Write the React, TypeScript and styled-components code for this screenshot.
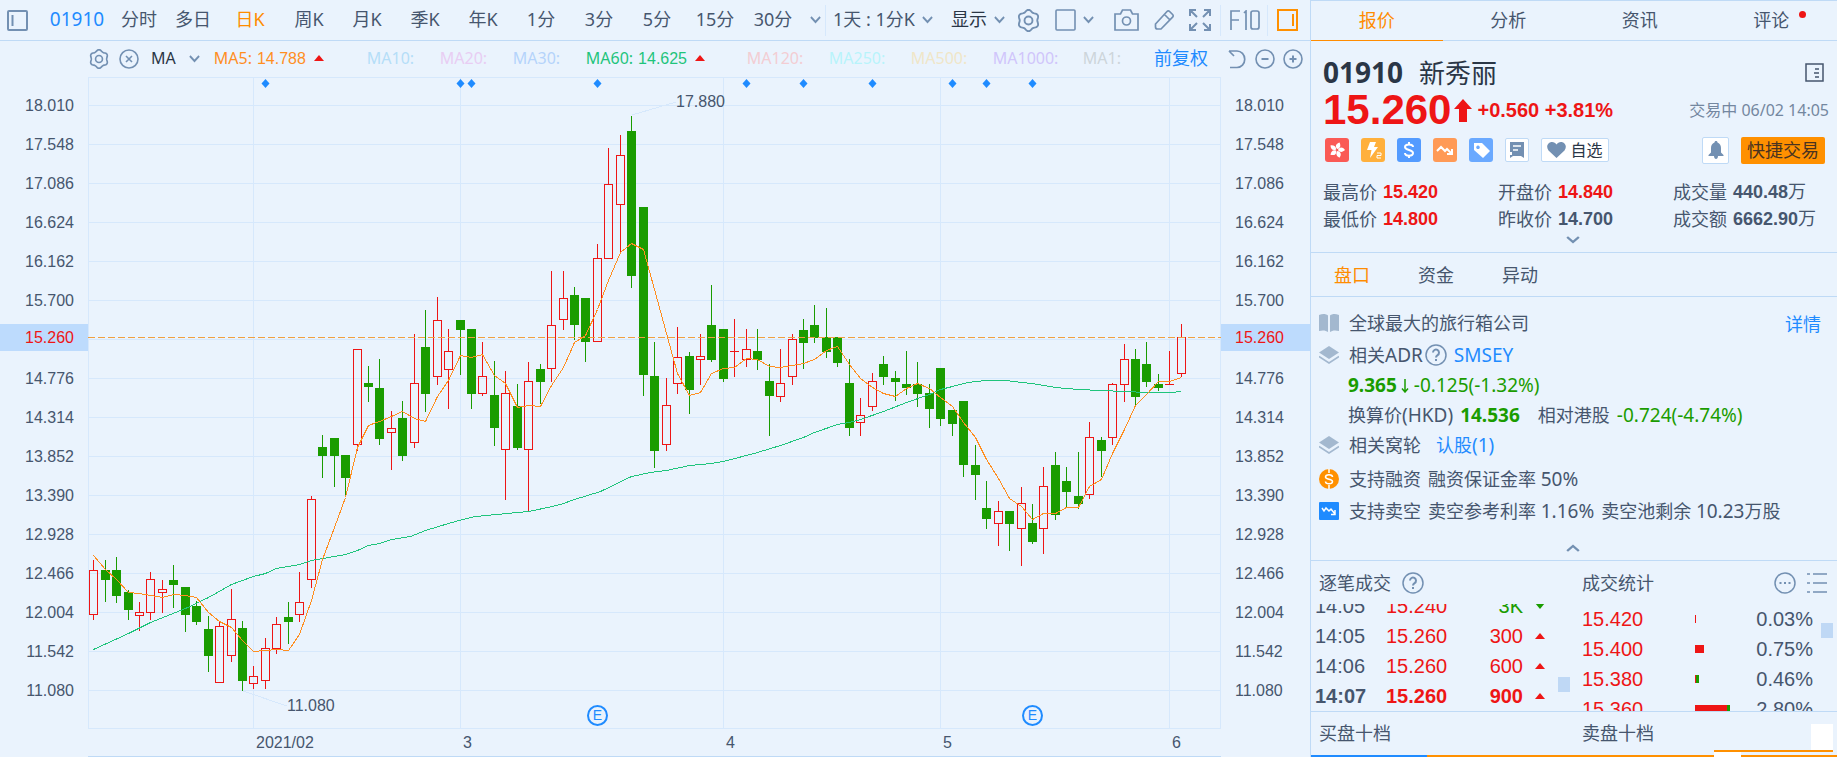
import React from "react";
import styled, { createGlobalStyle, css } from "styled-components";

const c = {
  bg: "#eaf3fd",
  line: "#bfdaf6",
  grid: "#d6e8fc",
  text: "#46566e",
  dark: "#2a3646",
  icon: "#7390b2",
  soft: "#a3b8cf",
  blue: "#1f8bff",
  orange: "#ff8c00",
  red: "#ee1515",
  green: "#1a9c00",
  mark: "#bddbfd",
};

const ui = `"Noto Sans", "Noto Sans CJK SC", sans-serif`;
const digits = `"Liberation Sans", "Noto Sans CJK SC", sans-serif`;

const GlobalStyle = createGlobalStyle`
  * { box-sizing: border-box; }
  body {
    margin: 0;
    background: ${c.bg};
    color: ${c.text};
    font-family: ${ui};
    font-size: 18px;
    font-weight: 400;
    overflow: hidden;
  }
  button { font: inherit; color: inherit; background: none; border: 0; padding: 0; cursor: pointer; }
  a { color: ${c.blue}; text-decoration: none; }
  ul, ol, dl, dd, h1, h2, p { margin: 0; padding: 0; list-style: none; font-size: inherit; font-weight: inherit; }
  svg { display: block; flex: none; }
`;

/* ---------- data ---------- */

type Candle = [x: number, up: 0 | 1, high: number, top: number, bottom: number, low: number];

const candles: Candle[] = [
  [93, 1, 560, 570, 615, 620], [105, 0, 560, 570, 580, 602], [116, 0, 557, 570, 596, 603],
  [128, 0, 590, 592, 610, 620], [139, 1, 602, 612, 616, 631], [150, 1, 572, 579, 613, 620],
  [162, 1, 580, 589, 593, 613], [173, 0, 565, 580, 585, 608], [185, 0, 587, 587, 615, 632],
  [196, 0, 601, 606, 622, 625], [208, 0, 616, 629, 656, 672], [219, 1, 621, 626, 683, 683],
  [231, 1, 589, 619, 656, 662], [242, 0, 621, 628, 681, 691], [253, 1, 666, 676, 684, 689],
  [265, 1, 638, 648, 681, 689], [276, 1, 617, 624, 649, 654], [288, 0, 602, 617, 622, 644],
  [299, 1, 572, 602, 615, 622], [311, 1, 496, 499, 580, 588], [322, 0, 435, 447, 456, 478],
  [334, 0, 438, 438, 456, 487], [345, 0, 455, 455, 478, 495], [357, 1, 349, 349, 445, 451],
  [368, 0, 366, 383, 387, 402], [379, 0, 359, 388, 439, 445], [391, 1, 411, 428, 433, 470],
  [402, 0, 401, 418, 456, 461], [414, 1, 334, 383, 443, 448], [425, 0, 310, 347, 394, 412],
  [437, 1, 297, 320, 377, 385], [448, 1, 329, 351, 370, 409], [460, 0, 320, 320, 330, 375],
  [471, 0, 329, 329, 394, 409], [482, 1, 342, 376, 394, 396], [494, 0, 361, 395, 428, 446],
  [505, 1, 371, 393, 450, 500], [517, 0, 384, 406, 448, 450], [528, 1, 362, 381, 450, 512],
  [540, 0, 364, 369, 382, 404], [551, 1, 271, 325, 369, 382], [563, 1, 271, 298, 320, 330],
  [574, 0, 287, 295, 325, 340], [585, 0, 298, 298, 342, 362], [597, 1, 244, 258, 342, 342],
  [608, 1, 148, 184, 259, 259], [620, 1, 135, 155, 205, 252], [631, 0, 116, 131, 276, 288],
  [643, 0, 207, 207, 375, 396], [654, 0, 342, 376, 451, 468], [666, 1, 378, 405, 445, 451],
  [677, 1, 327, 357, 384, 394], [689, 0, 352, 356, 390, 414], [700, 1, 334, 356, 360, 385],
  [711, 0, 285, 325, 360, 362], [723, 0, 329, 329, 379, 382], [734, 1, 319, 351, 352, 377],
  [746, 1, 329, 349, 360, 367], [757, 0, 329, 351, 360, 370], [769, 0, 364, 381, 396, 436],
  [780, 1, 349, 383, 397, 402], [792, 1, 334, 339, 377, 385], [803, 0, 319, 330, 343, 369],
  [814, 0, 305, 325, 338, 343], [826, 0, 308, 337, 352, 358], [837, 0, 337, 337, 363, 367],
  [849, 0, 359, 383, 428, 436], [860, 1, 398, 415, 423, 436], [872, 1, 373, 381, 407, 411],
  [883, 0, 356, 364, 377, 385], [895, 0, 371, 378, 382, 401], [906, 0, 351, 384, 388, 395],
  [917, 0, 362, 384, 394, 407], [929, 0, 384, 393, 409, 428], [940, 0, 368, 368, 419, 426],
  [952, 0, 410, 410, 424, 436], [963, 0, 401, 401, 465, 477], [975, 0, 445, 465, 475, 500],
  [986, 0, 481, 508, 519, 529], [998, 1, 501, 511, 524, 546], [1009, 0, 511, 511, 524, 551],
  [1021, 1, 487, 503, 529, 566], [1032, 0, 504, 523, 542, 544], [1043, 1, 467, 486, 529, 554],
  [1055, 0, 452, 465, 515, 520], [1066, 0, 467, 481, 492, 507], [1078, 0, 452, 496, 504, 509],
  [1089, 1, 422, 437, 495, 499], [1101, 0, 437, 440, 451, 477], [1112, 1, 383, 384, 438, 445],
  [1124, 1, 344, 359, 385, 402], [1135, 0, 349, 359, 397, 405], [1146, 0, 342, 364, 382, 387],
  [1158, 0, 374, 384, 388, 391], [1169, 1, 351, 384, 385, 385], [1181, 1, 324, 337, 374, 377],
];

const ma5 = [
  555, 569, 579, 592, 593, 595, 597, 594, 595, 597, 612, 621, 627, 640, 651, 650, 649, 650, 634, 600,
  559, 527, 497, 447, 425, 421, 416, 411, 418, 421, 396, 380, 355, 357, 354, 375, 383, 407, 405, 406,
  385, 367, 342, 335, 309, 280, 252, 243, 249, 289, 333, 373, 395, 392, 373, 368, 367, 358, 359, 366,
  367, 365, 363, 359, 350, 346, 364, 378, 387, 393, 396, 388, 383, 388, 397, 406, 422, 437, 459, 478,
  498, 506, 519, 513, 513, 507, 507, 486, 479, 453, 429, 405, 394, 381, 381, 377,
];

const ma60: [number, number][] = [
  [93, 649], [128, 633], [150, 622], [185, 608], [208, 597], [231, 584], [242, 580], [253, 576],
  [265, 573], [276, 568], [299, 564], [311, 560], [345, 554], [357, 550], [368, 545], [379, 543],
  [391, 539], [410, 536], [425, 530], [448, 523], [462, 519], [475, 516], [528, 511], [552, 506],
  [563, 503], [574, 499], [600, 491], [631, 476], [650, 472], [666, 470], [689, 465], [711, 463],
  [723, 461], [757, 452], [780, 445], [803, 437], [814, 432], [837, 424], [849, 422], [860, 419],
  [883, 411], [906, 402], [929, 394], [940, 389], [952, 386], [963, 383], [975, 381], [986, 380],
  [1005, 380], [1021, 382], [1032, 383], [1043, 385], [1055, 387], [1078, 389], [1100, 390],
  [1124, 391], [1146, 392], [1170, 392], [1181, 391],
];

const prices = [
  "18.010", "17.548", "17.086", "16.624", "16.162", "15.700", "15.260", "14.776",
  "14.314", "13.852", "13.390", "12.928", "12.466", "12.004", "11.542", "11.080",
];
const CURRENT = "15.260";
const eventMarks = [265, 460, 471, 597, 746, 803, 872, 952, 986, 1032];
const monthLines = [253, 460, 723, 940, 1169];
const periods = ["周K", "月K", "季K", "年K", "1分", "3分", "5分", "15分", "30分"];

const PLOT_X = 88;
const PLOT_Y = 77;
const PLOT_W = 1133;
const PLOT_H = 652;

/* ---------- icons ---------- */

const scallop = (r: number, amp: number) =>
  Array.from({ length: 72 }, (_, i) => {
    const a = (i / 72) * Math.PI * 2;
    const d = r + amp * Math.cos(6 * a + Math.PI);
    return `${i ? "L" : "M"}${(11 + d * Math.cos(a)).toFixed(2)} ${(11 + d * Math.sin(a)).toFixed(2)}`;
  }).join("") + "Z";

const Stroke = styled.svg.attrs({ fill: "none", stroke: "currentColor", strokeWidth: 2 })``;

const Gear = ({ size = 23 }: { size?: number }) => (
  <Stroke width={size} height={size} viewBox="0 0 22 22">
    <path d={scallop(9.3, 0.9)} strokeWidth="1.800" />
    <circle cx="11" cy="11" r="3.800" strokeWidth="1.800" />
  </Stroke>
);
const Chevron = ({ up = false, w = 11 }: { up?: boolean; w?: number }) => (
  <Stroke width={w} height="8" viewBox="0 0 12 8" preserveAspectRatio="none">
    <path d={up ? "M1 7 6 2l5 5" : "M1 1l5 5 5-5"} />
  </Stroke>
);
const CircleIcon = ({ kind, size = 20 }: { kind: "x" | "-" | "+"; size?: number }) => (
  <Stroke width={size} height={size} viewBox="0 0 20 20">
    <circle cx="10" cy="10" r="9" strokeWidth="1.600" />
    {kind === "x" && <path d="M7 7l6 6M13 7l-6 6" strokeWidth="1.600" />}
    {kind !== "x" && <path d="M6.500 10h7" />}
    {kind === "+" && <path d="M10 6.500v7" />}
  </Stroke>
);
const Question = () => (
  <Stroke width="22" height="22" viewBox="0 0 22 22">
    <circle cx="11" cy="11" r="10" strokeWidth="1.500" />
    <path d="M8 8.600a3 3 0 1 1 4.600 2.500c-1 .7-1.600 1.200-1.600 2.400M11 15v2" />
  </Stroke>
);
const Layers = () => (
  <svg width="20" height="20" viewBox="0 0 20 20" fill={c.soft}>
    <path d="M10 1l10 6.500-10 6.500L0 7.500z" />
    <path d="M0 11.500l10 6.500 10-6.500" fill="none" stroke={c.soft} strokeWidth="1.500" />
  </svg>
);

/* ---------- layout ---------- */

const Page = styled.div`
  display: flex;
  min-height: 100vh;
`;
const ChartSide = styled.main`
  flex: 1;
  min-width: 0;
`;
const QuoteSide = styled.aside`
  width: 527px;
  flex: none;
  border-left: 1px solid ${c.line};
`;

/* ---------- toolbar ---------- */

const Toolbar = styled.nav`
  display: flex;
  align-items: center;
  height: 41px;
  padding: 0 12px 0 7px;
  border-bottom: 1px solid ${c.line};
  color: ${c.icon};
`;
const Period = styled.button<{ $w?: number; $tone?: string }>`
  width: ${(p) => p.$w ?? 58}px;
  line-height: 24px;
  padding-bottom: 2px;
  white-space: nowrap;
  color: ${(p) => p.$tone ?? c.text};
`;
const Code = styled(Period)`
  font-size: 19px;
  margin-left: 14px;
`;
const Tool = styled.button<{ $ml?: number; $tone?: string }>`
  display: flex;
  align-items: center;
  gap: 7px;
  margin-left: ${(p) => p.$ml ?? 15}px;
  line-height: 24px;
  white-space: nowrap;
  color: ${(p) => p.$tone ?? c.icon};
`;
const ToolText = styled.span<{ $tone?: string }>`
  padding-bottom: 2px;
  color: ${(p) => p.$tone ?? c.text};
`;
const Rule = styled.span<{ $ml: number }>`
  width: 1px;
  height: 31px;
  margin-left: ${(p) => p.$ml}px;
  background: ${c.grid};
`;
const Spacer = styled.span`
  flex: 1;
`;

/* ---------- legend ---------- */

const Legend = styled.div`
  display: flex;
  align-items: center;
  height: 36px;
  padding: 0 7px 0 89px;
  font-size: 16px;
  color: ${c.icon};
`;
const LegendButton = styled.button<{ $ml?: number; $mr?: number }>`
  display: flex;
  align-items: center;
  gap: 13px;
  margin: 0 ${(p) => p.$mr ?? 0}px 0 ${(p) => p.$ml ?? 0}px;
`;
const MaItem = styled.span<{ $w: number; $tone: string }>`
  display: flex;
  align-items: center;
  width: ${(p) => p.$w}px;
  padding-bottom: 2px;
  color: ${(p) => p.$tone};
  white-space: nowrap;
`;
const MaValue = styled.span`
  margin: 0 8px 0 5px;
  padding-top: 2px;
  font-family: ${digits};
`;
const Triangle = styled.i<{ $down?: boolean }>`
  display: inline-block;
  border: solid transparent;
  border-width: 0 5px;
  ${(p) =>
    p.$down
      ? css`border-top: 6px solid ${c.green};`
      : css`border-bottom: 6px solid ${c.red};`}
`;
const Adjust = styled.button`
  font-size: 18px;
  line-height: 24px;
  color: ${c.blue};
  margin-right: 20px;
  padding-bottom: 3px;
`;

/* ---------- chart ---------- */

const ChartRow = styled.section`
  display: flex;
`;
const Axis = styled.ol<{ $right?: boolean }>`
  width: ${(p) => (p.$right ? 89 : 88)}px;
  padding-top: 9px;
  font: 16px/39px ${digits};
  text-align: ${(p) => (p.$right ? "left" : "right")};
`;
const Tick = styled.li<{ $current: boolean }>`
  padding: 0 14px;
  ${(p) =>
    p.$current &&
    css`
      margin: 4px 0 8px;
      line-height: 27px;
      color: ${c.red};
      background: ${c.mark};
    `}
`;
const Plot = styled.div`
  position: relative;
  flex: 1;
  min-width: 0;
  svg { width: 100%; height: ${PLOT_H}px; }
`;
const Callout = styled.span<{ $x: number; $y: number }>`
  position: absolute;
  left: ${(p) => (p.$x / PLOT_W) * 100}%;
  top: ${(p) => p.$y}px;
  font: 16px/20px ${digits};
`;
const Earnings = styled.button<{ $x: number }>`
  position: absolute;
  left: ${(p) => (p.$x / PLOT_W) * 100}%;
  bottom: 3px;
  width: 21px;
  height: 21px;
  margin-left: -10px;
  border: 2px solid ${c.blue};
  border-radius: 50%;
  color: ${c.blue};
  font: 14px/17px ${digits};
`;
const Months = styled.ol`
  display: grid;
  grid-template-columns: 168fr 207fr 263fr 217fr 229fr 49fr;
  height: 28px;
  margin: 0 89px 0 88px;
  border-bottom: 1px solid ${c.line};
  font: 16px/27px ${digits};
`;

function CandleChart() {
  return (
    <svg
      viewBox={`${PLOT_X} ${PLOT_Y} ${PLOT_W} ${PLOT_H}`}
      preserveAspectRatio="none"
      shapeRendering="crispEdges"
      role="img"
      aria-label="日K"
    >
      <g stroke={c.grid} fill="none">
        <rect x={88.5} y={77.5} width={1132} height={651} />
        {prices.map((p, i) => (
          <path key={p} d={`M88 ${105.5 + 39 * i}H1221`} />
        ))}
        {monthLines.map((x) => (
          <path key={x} d={`M${x + 0.5} 77V729`} />
        ))}
        <path d="M632 115L676 102M243 691L287 706" />
      </g>
      {candles.map(([x, up, high, top, bottom, low]) =>
        up ? (
          <g key={x} fill={c.red}>
            {top > high && <rect x={x} y={high} width="1" height={top - high} />}
            {low > bottom && <rect x={x} y={bottom} width="1" height={low - bottom} />}
            {bottom - top < 2 ? (
              <rect x={x - 4} y={top} width="9" height="1" />
            ) : (
              <rect x={x - 3.5} y={top + 0.5} width="8" height={bottom - top - 1} fill="none" stroke={c.red} />
            )}
          </g>
        ) : (
          <g key={x} fill={c.green}>
            <rect x={x} y={high} width="1" height={low - high} />
            <rect x={x - 4} y={top} width="9" height={bottom - top} />
          </g>
        ),
      )}
      <path d="M88 337.5H1221" stroke="#f0a040" strokeDasharray="7 3" />
      <polyline points={ma60.map(([x, y]) => `${x + 0.5},${y + 0.5}`).join(" ")} fill="none" stroke="#1fc47c" />
      <polyline
        points={ma5.map((y, i) => `${candles[i][0] + 0.5},${y + 0.5}`).join(" ")}
        fill="none"
        stroke="#ff8e1f"
      />
      <g fill={c.blue} shapeRendering="auto">
        {eventMarks.map((x) => (
          <path key={x} d={`M${x + 0.5} 79l4 4.500-4 4.500-4-4.500z`} />
        ))}
      </g>
    </svg>
  );
}

const PriceAxis = ({ right = false }: { right?: boolean }) => (
  <Axis $right={right}>
    {prices.map((p) => (
      <Tick key={p} $current={p === CURRENT}>
        {p}
      </Tick>
    ))}
  </Axis>
);

/* ---------- quote panel ---------- */

const Tabs = styled.nav`
  display: grid;
  grid-template-columns: repeat(4, 1fr);
  height: 41px;
  border-top: 1px solid ${c.line};
  border-bottom: 1px solid ${c.line};
`;
const Tab = styled.button<{ $on?: boolean }>`
  display: flex;
  justify-content: center;
  height: 40px;
  line-height: 38px;
  color: ${(p) => (p.$on ? c.orange : c.text)};
  border-bottom: ${(p) => (p.$on ? `1px solid ${c.orange}` : "0")};
`;
const Dot = styled.i`
  width: 7px;
  height: 7px;
  margin: 10px -17px 0 10px;
  border-radius: 50%;
  background: ${c.red};
`;
const Head = styled.header`
  height: 212px;
  padding: 13px 8px 0 12px;
  border-bottom: 1px solid ${c.line};
`;
const Line = styled.div`
  display: flex;
  align-items: center;
`;
const Title = styled.h1`
  flex: 1;
  font-size: 26px;
  line-height: 36px;
  color: ${c.dark};
`;
const TitleCode = styled.b`
  margin-right: 16px;
  font-size: 28px;
  font-weight: 700;
`;
const PriceLine = styled(Line)`
  height: 38px;
  color: ${c.red};
  font-family: ${digits};
  font-weight: 700;
`;
const Last = styled.span`
  margin-right: 3px;
  font-size: 42px;
  line-height: 38px;
`;
const Change = styled.span`
  flex: 1;
  margin-left: 5px;
  font-size: 20px;
`;
const Clock = styled.time`
  font: 400 16px/20px ${ui};
  color: #7487a0;
`;
const Tags = styled(Line)`
  gap: 12px;
  height: 28px;
  margin-top: 7px;
  padding: 0 4px 0 2px;
`;
const Tag = styled.button<{ $bg: string }>`
  width: 24px;
  height: 24px;
  border-radius: 3px;
  background: ${(p) => p.$bg};
  color: #fff;
`;
const Plain = styled.button<{ $w: number; $h?: number }>`
  display: flex;
  align-items: center;
  justify-content: center;
  gap: 4px;
  width: ${(p) => p.$w}px;
  height: ${(p) => p.$h ?? 24}px;
  border: 1px solid ${c.line};
  border-radius: 2px;
  background: #fff;
  color: ${c.dark};
  font-size: 16px;
  line-height: 20px;
  white-space: nowrap;
`;
const Trade = styled.button`
  width: 84px;
  height: 27px;
  border-radius: 2px;
  background: #ff9000;
  color: #4a3320;
  line-height: 26px;
  white-space: nowrap;
`;
const Stats = styled.dl`
  display: grid;
  grid-template-columns: 175px 175px 1fr;
  margin-top: 15px;
  line-height: 27px;
  white-space: nowrap;
  div { display: flex; gap: 6px; }
`;
const Figure = styled.dd<{ $red?: boolean }>`
  font-family: ${digits};
  font-weight: 700;
  color: ${(p) => (p.$red ? c.red : c.text)};
  span { font-weight: 400; }
`;
const Fold = styled.button<{ $pad: string }>`
  display: flex;
  justify-content: center;
  width: 100%;
  padding: ${(p) => p.$pad};
  color: ${c.icon};
`;
const SubTabs = styled.nav`
  display: flex;
  gap: 48px;
  height: 44px;
  padding: 0 0 2px 23px;
  border-bottom: 1px solid ${c.line};
`;
const SubTab = styled.button<{ $on?: boolean }>`
  color: ${(p) => (p.$on ? c.orange : c.text)};
`;
const Facts = styled.section`
  height: 264px;
  padding: 11px 16px 0 8px;
  border-bottom: 1px solid ${c.line};
`;
const Fact = styled.div<{ $mt?: number; $indent?: boolean }>`
  display: flex;
  align-items: center;
  height: 30px;
  margin-top: ${(p) => p.$mt ?? 0}px;
  padding-left: ${(p) => (p.$indent ? 29 : 0)}px;
  color: ${c.text};
  > svg:first-child { margin-right: 10px; }
`;
const Words = styled.p`
  white-space: pre;
  line-height: 30px;
`;
const Gap = styled.span<{ $w?: number }>`
  display: inline-block;
  width: ${(p) => p.$w ?? 7}px;
`;
const Num = styled.span<{ $green?: boolean; $bold?: boolean }>`
  font-size: 19px;
  color: ${(p) => (p.$green ? c.green : "inherit")};
  font-weight: ${(p) => (p.$bold ? 700 : 400)};
`;
const Inline = styled.span`
  display: flex;
  margin: 0 7px 0 2px;
  color: ${c.icon};
`;
const Halves = styled.section`
  display: grid;
  grid-template-columns: 263px 1fr;
  border-bottom: 1px solid ${c.line};
`;
const Half = styled.div`
  position: relative;
  height: 150px;
`;
const HalfHead = styled.h2`
  display: flex;
  align-items: center;
  gap: 11px;
  height: 43px;
  padding: 0 10px 0 8px;
  color: ${c.icon};
`;
const Name = styled.span`
  flex: none;
  padding-bottom: 2px;
  color: ${c.text};
`;
const Clip = styled.div<{ $end?: boolean }>`
  display: flex;
  flex-direction: column;
  align-items: flex-start;
  justify-content: ${(p) => (p.$end ? "flex-end" : "flex-start")};
  height: 107px;
  overflow: hidden;
`;
const Table = styled.table<{ $w: number }>`
  flex: none;
  width: ${(p) => p.$w}px;
  border-collapse: collapse;
  table-layout: fixed;
  font: 20px/30px ${digits};
  td { height: 30px; padding: 0; }
`;
const Cell = styled.td<{ $w: number; $tone?: string; $right?: boolean; $pl?: number }>`
  width: ${(p) => p.$w}px;
  text-align: ${(p) => (p.$right ? "right" : "left")};
  color: ${(p) => p.$tone ?? c.text};
  && { padding-left: ${(p) => p.$pl ?? 0}px; }
`;
const TradeRow = styled.tr<{ $bold?: boolean }>`
  font-weight: ${(p) => (p.$bold ? 700 : 400)};
`;
const MarkBox = styled.span`
  display: flex;
  justify-content: flex-end;
`;
const Bars = styled.span`
  display: flex;
  height: 8px;
`;
const Bar = styled.i<{ $tone: string }>`
  background: ${(p) => p.$tone};
`;
const Thumb = styled.i<{ $x: number; $y: number }>`
  position: absolute;
  left: ${(p) => p.$x}px;
  top: ${(p) => p.$y}px;
  width: 12px;
  height: 15px;
  background: #bfd8f5;
`;
const Depth = styled.section`
  position: relative;
  display: grid;
  grid-template-columns: 263px 1fr;
  height: 43px;
  padding-left: 8px;
  line-height: 43px;
`;
const DepthBar = styled.div`
  display: grid;
  grid-template-columns: 116px 1fr;
  height: 2px;
`;
const Ghost = styled.i<{ $r: number; $t: number; $w: number; $h: number; $tone?: string }>`
  position: absolute;
  right: ${(p) => p.$r}px;
  top: ${(p) => p.$t}px;
  width: ${(p) => p.$w}px;
  height: ${(p) => p.$h}px;
  background: ${(p) => p.$tone ?? "#fff"};
`;

const trades = [
  { t: "14:05", p: "15.240", q: "3K", up: false },
  { t: "14:05", p: "15.260", q: "300", up: true },
  { t: "14:06", p: "15.260", q: "600", up: true },
  { t: "14:07", p: "15.260", q: "900", up: true },
];
const volumes = [
  { p: "15.420", r: 1, g: 0, pct: "0.03%" },
  { p: "15.400", r: 9, g: 0, pct: "0.75%" },
  { p: "15.380", r: 1, g: 3, pct: "0.46%" },
  { p: "15.360", r: 32, g: 3, pct: "2.80%" },
];
const faded: [string, number, string][] = [
  ["MA10:", 73, "#b5def8"],
  ["MA20:", 73, "#e8cdf3"],
  ["MA30:", 73, "#b5d3fb"],
];
const faded2: [string, number, string][] = [
  ["MA120:", 82, "#f3cdd3"],
  ["MA250:", 82, "#b8f3fb"],
  ["MA500:", 82, "#f0e6c8"],
  ["MA1000:", 90, "#d0c5fb"],
  ["MA1:", 37, "#cdd5da"],
];

export default function App() {
  return (
    <Page>
      <GlobalStyle />
      <ChartSide>
        <Toolbar>
          <Stroke width="21" height="21" viewBox="0 0 21 21">
            <rect x="1" y="1" width="19" height="19" rx="1" />
            <path d="M5.500 5v11" />
          </Stroke>
          <Code $w={70} $tone={c.blue}>01910</Code>
          <Period $w={54}>分时</Period>
          <Period $w={54}>多日</Period>
          <Period $w={60} $tone={c.orange}>日K</Period>
          {periods.map((p) => (
            <Period key={p}>{p}</Period>
          ))}
          <Tool $ml={8} aria-label="更多"><Chevron /></Tool>
          <Rule $ml={4} />
          <Tool $ml={7}><ToolText>1天 : 1分K</ToolText><Chevron /></Tool>
          <Tool $ml={18}><ToolText $tone={c.dark}>显示</ToolText><Chevron /></Tool>
          <Spacer />
          <Tool $ml={0} aria-label="设置"><Gear /></Tool>
          <Tool aria-label="布局">
            <Stroke width="21" height="22" viewBox="0 0 21 22"><rect x="1" y="1" width="19" height="20" rx="1" strokeWidth="1.600" /></Stroke>
            <Chevron />
          </Tool>
          <Tool $ml={20} aria-label="截图">
            <Stroke width="25" height="22" viewBox="0 0 25 22">
              <path d="M1 5h5.500l2-4h8l2 4H24v16H1z" strokeWidth="1.700" />
              <circle cx="12.500" cy="12" r="4" strokeWidth="1.700" />
            </Stroke>
          </Tool>
          <Tool aria-label="画线">
            <Stroke width="20" height="22" viewBox="0 0 20 22">
              <path
                d="M1.500 15L13 2.500a1.800 1.800 0 0 1 2.600 0l3 3a1.800 1.800 0 0 1 0 2.600L7 20H3.500q-2 0-2-2zM10.500 5.500l5.500 5.500"
                strokeWidth="1.700"
              />
            </Stroke>
          </Tool>
          <Tool aria-label="全屏">
            <Stroke width="22" height="22" viewBox="0 0 22 22">
              <path d="M7 1H1v6M1 1l7 7M15 1h6v6M21 1l-7 7M7 21H1v-6M1 21l7-7M15 21h6v-6M21 21l-7-7" />
            </Stroke>
          </Tool>
          <Rule $ml={9} />
          <Tool $ml={9} aria-label="F10">
            <Stroke width="30" height="20" viewBox="0 0 30 20">
              <path d="M1 20V1h9M1 10h8M14 3l2-2v19" strokeWidth="1.700" />
              <rect x="21" y="1" width="8" height="18" rx="2" strokeWidth="1.700" />
            </Stroke>
          </Tool>
          <Rule $ml={7} />
          <Tool $ml={9} $tone="#ff9000" aria-label="侧栏">
            <Stroke width="21" height="22" viewBox="0 0 21 22">
              <rect x="1" y="1" width="19" height="20" />
              <path d="M16 5v12" />
            </Stroke>
          </Tool>
        </Toolbar>

        <Legend>
          <LegendButton aria-label="指标设置"><Gear size={20} /></LegendButton>
          <LegendButton $ml={10} aria-label="关闭"><CircleIcon kind="x" /></LegendButton>
          <LegendButton $ml={12} $mr={14}><ToolText $tone={c.dark}>MA</ToolText><Chevron /></LegendButton>
          <MaItem $w={153} $tone="#ff8e1f">MA5:<MaValue>14.788</MaValue><Triangle /></MaItem>
          {faded.map(([n, w, t]) => <MaItem key={n} $w={w} $tone={t}>{n}</MaItem>)}
          <MaItem $w={161} $tone="#1fc47c">MA60:<MaValue>14.625</MaValue><Triangle /></MaItem>
          {faded2.map(([n, w, t]) => <MaItem key={n} $w={w} $tone={t}>{n}</MaItem>)}
          <Spacer />
          <Adjust>前复权</Adjust>
          <LegendButton aria-label="还原">
            <Stroke width="18" height="20" viewBox="0 0 18 20">
              <path d="M1 2h8a7.500 8 0 0 1 0 16.500H2M1 2l5 5" strokeWidth="1.700" />
            </Stroke>
          </LegendButton>
          <LegendButton $ml={9} aria-label="缩小"><CircleIcon kind="-" /></LegendButton>
          <LegendButton $ml={8} aria-label="放大"><CircleIcon kind="+" /></LegendButton>
        </Legend>

        <ChartRow>
          <PriceAxis />
          <Plot>
            <CandleChart />
            <Callout $x={588} $y={15}>17.880</Callout>
            <Callout $x={199} $y={619}>11.080</Callout>
            <Earnings $x={509}>E</Earnings>
            <Earnings $x={944}>E</Earnings>
          </Plot>
          <PriceAxis right />
        </ChartRow>
        <Months>
          <li />
          {["2021/02", "3", "4", "5", "6"].map((m) => <li key={m}>{m}</li>)}
        </Months>
      </ChartSide>

      <QuoteSide>
        <Tabs>
          <Tab $on>报价</Tab>
          <Tab>分析</Tab>
          <Tab>资讯</Tab>
          <Tab>评论<Dot /></Tab>
        </Tabs>
        <Head>
          <Line>
            <Title><TitleCode>01910</TitleCode>新秀丽</Title>
            <Stroke width="19" height="19" viewBox="0 0 19 19" stroke={c.icon} style={{ marginRight: 5 }}>
              <path d="M1 1h17v17H1z" strokeWidth="1.500" />
              <path d="M10 6h4M9 10h5M10 14h4" strokeWidth="1.500" />
            </Stroke>
          </Line>
          <PriceLine>
            <Last>15.260</Last>
            <svg width="18" height="23" viewBox="0 0 18 23" fill={c.red}><path d="M9 0l9 10h-5v13H5V10H0z" /></svg>
            <Change>+0.560 +3.81%</Change>
            <Clock>交易中 06/02 14:05</Clock>
          </PriceLine>
          <Tags>
            <Tag $bg="#fa5a55" aria-label="港股">
              <svg width="24" height="24" viewBox="0 0 24 24" fill="#fff">
                {[0, 72, 144, 216, 288].map((a) => (
                  <path key={a} d="M12 11c-3-1.500-3-5 .5-7 2 2.500 2.500 5-.5 7z" transform={`rotate(${a + 15} 12 12)`} />
                ))}
              </svg>
            </Tag>
            <Tag $bg="#ffb03c" aria-label="L2">
              <svg width="24" height="24" viewBox="0 0 24 24" fill="#fff">
                <path d="M9 4h6l-2 5h4l-8 11 1.500-8H6z" />
                <path d="M16 15h4v2.500h-4V20h4" fill="none" stroke="#fff" />
              </svg>
            </Tag>
            <Tag $bg="#539bff" aria-label="融资">
              <svg width="24" height="24" viewBox="0 0 24 24" fill="none" stroke="#fff" strokeWidth="2">
                <path d="M16 9c0-3.500-8-3.500-8 0 0 3.500 8 2.500 8 6s-8 3.500-8 0M12 4v3M12 17v3" />
              </svg>
            </Tag>
            <Tag $bg="#ff9a56" aria-label="卖空">
              <svg width="24" height="24" viewBox="0 0 24 24" fill="none" stroke="#fff" strokeWidth="2">
                <path d="M4 13l4-4 4 4 2-2 4 4M19 11v5h-5" />
              </svg>
            </Tag>
            <Tag $bg="#6aa9ff" aria-label="标签">
              <svg width="24" height="24" viewBox="0 0 24 24" fill="#fff">
                <path fillRule="evenodd" d="M5 5h8l8 8-7 7-9-8zM9 7.500a1.800 1.800 0 1 0 .01 0z" />
              </svg>
            </Tag>
            <Plain $w={24} aria-label="笔记">
              <svg width="16" height="16" viewBox="0 0 16 16">
                <path d="M1 0h14v16l-3-2H4l-3 2V13h2v-3H1z" fill={c.icon} />
                <path d="M4 4h8M4 8h5" stroke="#fff" strokeWidth="1.500" />
              </svg>
            </Plain>
            <Plain $w={68}>
              <svg width="19" height="16" viewBox="0 0 19 16" fill={c.icon}>
                <path d="M9.500 16L1.500 8.500C-1.500 4.500 1 0 5 0c2 0 3.500 1 4.500 2.500C10.500 1 12 0 14 0c4 0 6.500 4.500 3.500 8.500z" />
              </svg>
              自选
            </Plain>
            <Spacer />
            <Plain $w={27} $h={27} aria-label="提醒">
              <svg width="16" height="18" viewBox="0 0 16 18" fill={c.icon}>
                <path d="M8 0c1 0 1.500.7 1.500 1.500C12 2.500 13 4.500 13 7v4.500l2.500 2.500v1H.5v-1L3 11.500V7c0-2.500 1-4.500 3.500-5.500C6.500.7 7 0 8 0zM6 15h4c0 2-1 3-2 3s-2-1-2-3z" />
              </svg>
            </Plain>
            <Trade>快捷交易</Trade>
          </Tags>
          <Stats>
            <div><dt>最高价</dt><Figure $red>15.420</Figure></div>
            <div><dt>开盘价</dt><Figure $red>14.840</Figure></div>
            <div><dt>成交量</dt><Figure>440.48<span>万</span></Figure></div>
            <div><dt>最低价</dt><Figure $red>14.800</Figure></div>
            <div><dt>昨收价</dt><Figure>14.700</Figure></div>
            <div><dt>成交额</dt><Figure>6662.90<span>万</span></Figure></div>
          </Stats>
          <Fold $pad="3px 6px 0 0" aria-label="展开"><Chevron w={14} /></Fold>
        </Head>

        <SubTabs>
          <SubTab $on>盘口</SubTab>
          <SubTab>资金</SubTab>
          <SubTab>异动</SubTab>
        </SubTabs>

        <Facts>
          <Fact>
            <svg width="20" height="18" viewBox="0 0 20 18" fill={c.soft}>
              <path d="M0 1c4-1.500 7-1 9 .5V18c-2-1.500-5-2-9-1zM20 1c-4-1.500-7-1-9 .5V18c2-1.500 5-2 9-1z" />
            </svg>
            <Words>全球最大的旅行箱公司</Words>
            <Spacer />
            <a href="#detail">详情</a>
          </Fact>
          <Fact $mt={2}>
            <Layers />
            <Words>相关<Num>ADR</Num></Words>
            <Inline><Question /></Inline>
            <a href="#adr"><Num>SMSEY</Num></a>
          </Fact>
          <Fact $indent>
            <Num $green $bold>9.365</Num>
            <svg width="17" height="16" viewBox="0 0 17 16" fill="none" stroke={c.green} strokeWidth="1.500">
              <path d="M8 2v13M5 11.500l3 3.500 3-3.500" />
            </svg>
            <Num $green>-0.125(-1.32%)</Num>
          </Fact>
          <Fact $indent>
            <Words>
              换算价<Num>(HKD)</Num><Gap /><Num $green $bold>14.536</Num><Gap $w={18} />相对港股<Gap />
              <Num $green>-0.724(-4.74%)</Num>
            </Words>
          </Fact>
          <Fact>
            <Layers />
            <Words>相关窝轮<Gap $w={15} /><a href="#warrant">认股<Num>(1)</Num></a></Words>
          </Fact>
          <Fact $mt={4}>
            <svg width="20" height="20" viewBox="0 0 20 20">
              <circle cx="10" cy="10" r="10" fill="#ff9000" />
              <path d="M13.500 8c0-3-7-3-7 0s7 1.500 7 4.500-7 3-7 0M10 0v4M10 16v4" fill="none" stroke="#fff" strokeWidth="1.500" />
            </svg>
            <Words>支持融资<Gap />融资保证金率 <Num>50%</Num></Words>
          </Fact>
          <Fact $mt={2}>
            <svg width="20" height="18" viewBox="0 0 20 18">
              <rect width="20" height="18" rx="1" fill={c.blue} />
              <path d="M3 6l2 3 2-3 3 3 2-2 4 5M16 8v4.500h-4" fill="none" stroke="#fff" strokeWidth="1.500" />
            </svg>
            <Words>支持卖空<Gap />卖空参考利率 <Num>1.16%</Num><Gap />卖空池剩余 <Num>10.23</Num>万股</Words>
          </Fact>
          <Fold $pad="18px 0 0 6px" aria-label="收起"><Chevron up w={14} /></Fold>
        </Facts>

        <Halves>
          <Half>
            <HalfHead><Name>逐笔成交</Name><Question /></HalfHead>
            <Clip $end>
              <Table $w={234}>
                <tbody>
                  {trades.map((r, i) => (
                    <TradeRow key={i} $bold={i === 3}>
                      <Cell $w={75} $pl={4}>{r.t}</Cell>
                      <Cell $w={62} $tone={c.red}>{r.p}</Cell>
                      <Cell $w={75} $right $tone={r.up ? c.red : c.green}>{r.q}</Cell>
                      <Cell $w={22}><MarkBox><Triangle $down={!r.up} /></MarkBox></Cell>
                    </TradeRow>
                  ))}
                </tbody>
              </Table>
            </Clip>
            <Thumb $x={247} $y={116} />
          </Half>
          <Half>
            <HalfHead>
              <Name>成交统计</Name>
              <Spacer />
              <Stroke width="22" height="22" viewBox="0 0 22 22">
                <circle cx="11" cy="11" r="10" strokeWidth="1.500" />
                <path d="M5.500 11h2M10 11h2M14.500 11h2" />
              </Stroke>
              <Stroke width="20" height="21" viewBox="0 0 20 21">
                <path d="M0 2h3M6 2h14M0 11h3M6 11h14M0 20h3M6 20h14" strokeWidth="1.500" />
              </Stroke>
            </HalfHead>
            <Clip>
              <Table $w={239}>
                <tbody>
                  {volumes.map((v) => (
                    <tr key={v.p}>
                      <Cell $w={121} $pl={8} $tone={c.red}>{v.p}</Cell>
                      <Cell $w={50}>
                        <Bars>
                          <Bar $tone={c.red} style={{ width: v.r }} />
                          <Bar $tone={c.green} style={{ width: v.g }} />
                        </Bars>
                      </Cell>
                      <Cell $w={68} $right>{v.pct}</Cell>
                    </tr>
                  ))}
                </tbody>
              </Table>
            </Clip>
            <Thumb $x={247} $y={62} />
          </Half>
        </Halves>

        <Depth>
          <Name>买盘十档</Name>
          <Name>卖盘十档</Name>
          <Ghost $r={4} $t={12} $w={22} $h={26} />
          <Ghost $r={4} $t={38} $w={119} $h={2} $tone="#ff9000" />
          <Ghost $r={96} $t={40} $w={27} $h={5} />
        </Depth>
        <DepthBar>
          <Bar $tone={c.blue} />
          <Bar $tone="#ff9000" />
        </DepthBar>
      </QuoteSide>
    </Page>
  );
}
